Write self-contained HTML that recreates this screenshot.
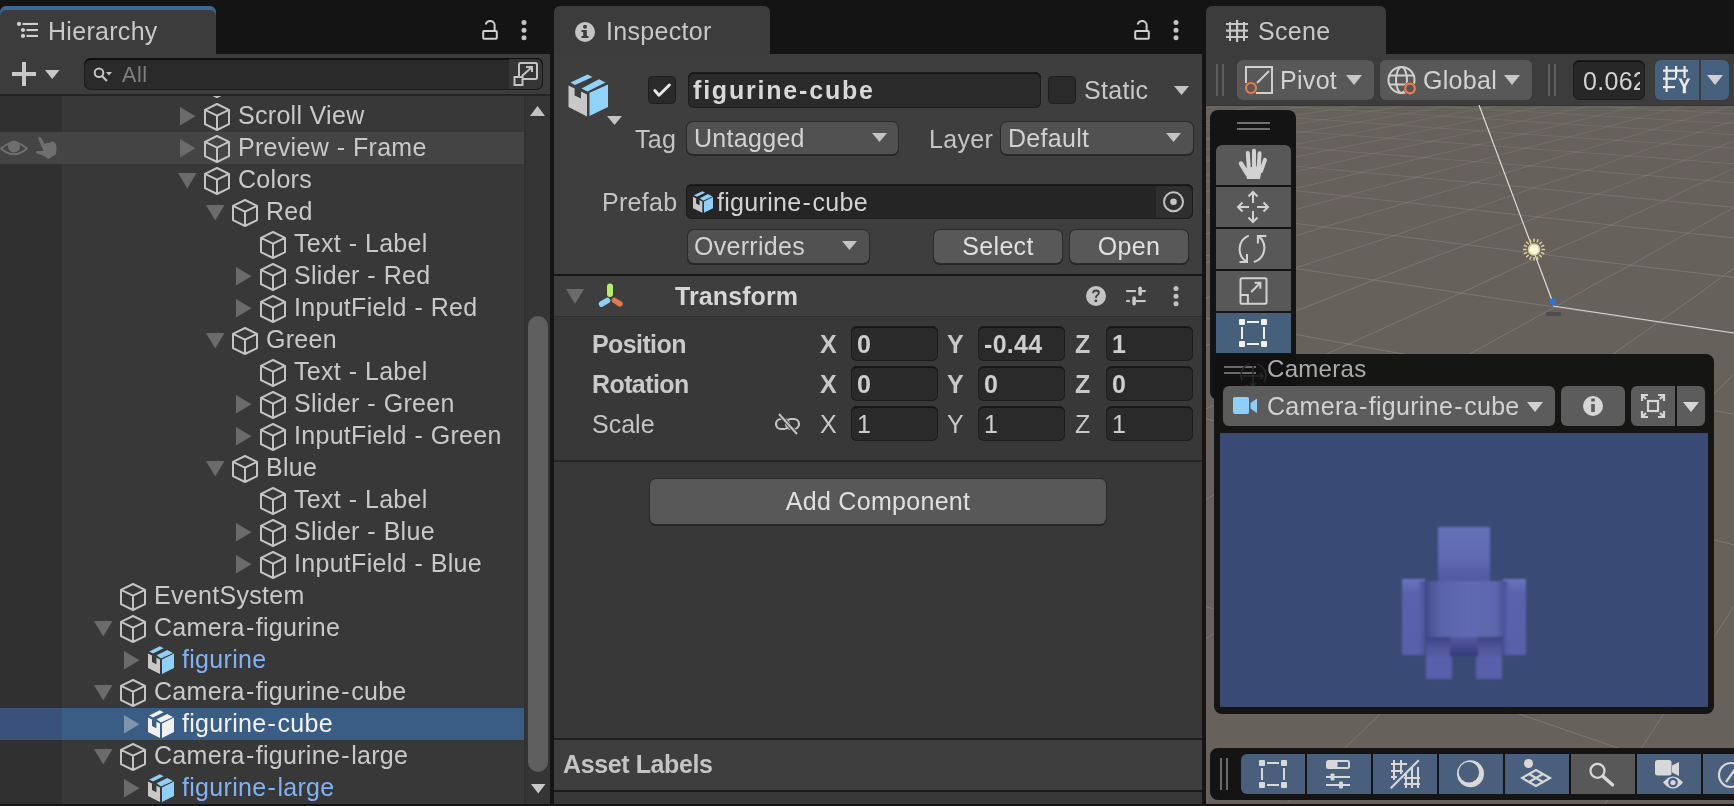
<!DOCTYPE html>
<html><head><meta charset="utf-8"><style>
html,body{margin:0;padding:0;width:1734px;height:806px;overflow:hidden;background:#141414;font-family:"Liberation Sans", sans-serif;}
.abs{position:absolute;}
.ic{position:absolute;display:block;}
.t{position:absolute;will-change:transform;font-size:25px;line-height:28px;white-space:nowrap;color:#d2d2d2;letter-spacing:0.3px}
.tab{position:absolute;top:6px;height:48px;background:#3c3c3c;border-radius:6px 6px 0 0;overflow:hidden}
.stripe{position:absolute;left:0;top:0;right:0;bottom:0;border-radius:6px 6px 0 0;box-shadow:inset 0 4px 0 #3c6898}
.tabt{position:absolute;will-change:transform;top:11px;font-size:25px;line-height:28px;color:#c8c8c8;letter-spacing:0.3px}
</style></head><body>
<div class="tab" style="left:0;width:216px;"><div class="stripe"></div><svg class="ic" style="left:16px;top:15px" width="24" height="20" viewBox="0 0 24 20"><circle cx="3" cy="2.9" r="2.1" fill="#cfcfcf"/><circle cx="7" cy="9" r="2.1" fill="#cfcfcf"/><circle cx="7" cy="14.9" r="2.1" fill="#cfcfcf"/><rect x="6.5" y="1.9" width="15.5" height="2.1" fill="#cfcfcf"/><rect x="10.5" y="8" width="11.5" height="2.1" fill="#cfcfcf"/><rect x="10.5" y="13.9" width="11.5" height="2.1" fill="#cfcfcf"/></svg><span class="tabt" style="left:48px">Hierarchy</span></div><svg class="ic" style="left:480px;top:20px" width="20" height="22" viewBox="0 0 20 22"><rect x="3.2" y="11" width="13.6" height="7.8" rx="1" fill="none" stroke="#cfcfcf" stroke-width="2"/><path d="M14.6 11 L14.6 6.2 A4.6 4.6 0 0 0 5.6 4.4" fill="none" stroke="#cfcfcf" stroke-width="2"/></svg><svg class="ic" style="left:520px;top:20px" width="8" height="22" viewBox="0 0 8 22"><circle cx="4" cy="2.6" r="2.5" fill="#c4c4c4"/><circle cx="4" cy="10.2" r="2.5" fill="#c4c4c4"/><circle cx="4" cy="17.8" r="2.5" fill="#c4c4c4"/></svg><div class="abs" style="left:0;top:54px;width:550px;height:750px;background:#383838"></div><div class="abs" style="left:0;top:54px;width:550px;height:40px;background:#3c3c3c"></div><div class="abs" style="left:0;top:94px;width:550px;height:2px;background:#242424"></div><div class="abs" style="left:12px;top:72px;width:24px;height:4px;background:#c8c8c8"></div><div class="abs" style="left:22px;top:62px;width:4px;height:24px;background:#c8c8c8"></div><svg class="ic" style="left:45px;top:70px" width="15" height="10" viewBox="0 0 15 10"><path d="M0 0 L14.5 0 L7.25 9 Z" fill="#c8c8c8"/></svg><div class="abs" style="left:84px;top:58px;width:459px;height:32px;border-radius:7px;background:#2a2a2a;box-shadow:inset 0 2px 0 #0f0f0f, inset 0 0 0 1px #1c1c1c"></div><svg class="ic" style="left:92px;top:66px" width="24" height="18" viewBox="0 0 24 18"><circle cx="7" cy="6.8" r="4.3" fill="none" stroke="#c4c4c4" stroke-width="2"/><path d="M10 10 L15 15" stroke="#c4c4c4" stroke-width="2.2"/><path d="M14 6 L20 6 L17 9.5 Z" fill="#c4c4c4"/></svg><span class="t" style="left:122px;top:61px;font-size:21.5px;color:#808080;letter-spacing:0.6px">All</span><div class="abs" style="left:509px;top:59px;width:33px;height:30px;border-radius:0 6px 6px 0;background:#363636"></div><svg class="ic" style="left:513px;top:61px" width="26" height="26" viewBox="0 0 26 26"><rect x="6" y="2" width="18" height="16" rx="1.5" fill="none" stroke="#c4c4c4" stroke-width="2"/><rect x="1.5" y="16" width="8" height="8" fill="#363636" stroke="#c4c4c4" stroke-width="2"/><path d="M9 15 L19 6 M13 6 L19 6 L19 11" fill="none" stroke="#c4c4c4" stroke-width="2"/></svg><div class="abs" style="left:0;top:96px;width:62px;height:708px;background:#303030"></div><div id="tree" class="abs" style="left:0;top:96px;width:524px;height:708px;overflow:hidden"><svg class="ic" style="left:203px;top:-27px" width="28" height="30" viewBox="-1 -1 28 30"><path d="M13 1 L25 6.8 L25 21.2 L13 27 L1 21.2 L1 6.8 Z M1 6.8 L13 12.6 L25 6.8 M13 12.6 L13 27" fill="none" stroke="#c4c4c4" stroke-width="2" stroke-linejoin="round"/></svg><svg class="ic" style="left:180px;top:11px" width="16" height="19" viewBox="0 0 16 19"><path d="M0 0 L15.5 9.25 L0 18.5 Z" fill="#6b6b6b"/></svg><svg class="ic" style="left:203px;top:5.5px" width="28" height="30" viewBox="-1 -1 28 30"><path d="M13 1 L25 6.8 L25 21.2 L13 27 L1 21.2 L1 6.8 Z M1 6.8 L13 12.6 L25 6.8 M13 12.6 L13 27" fill="none" stroke="#c4c4c4" stroke-width="2" stroke-linejoin="round"/></svg><span class="t" style="left:238px;top:5px;color:#c9c9c9">Scroll View</span><div class="abs" style="left:0;top:36px;width:524px;height:32px;background:#444444"></div><svg class="ic" style="left:0px;top:44px" width="30" height="18" viewBox="0 0 30 18"><path d="M1 8.5 Q14 -3 27 8.5 Q14 20 1 8.5 Z" fill="none" stroke="#6f6f6f" stroke-width="1.8"/><circle cx="14" cy="6.5" r="6" fill="#6f6f6f"/></svg><svg class="ic" style="left:35px;top:40px" width="24" height="24" viewBox="0 0 24 24"><path d="M3 2 Q5 0 6.5 2.5 L9.5 8 L12 6.8 L14.5 7 L16.5 5.5 L19 6 Q21 7 21.5 12 L21 18 L13.5 23 L9 20 L2 17.5 Q0 16 2 15 L8.5 15 Z" fill="#6f6f6f"/></svg><svg class="ic" style="left:180px;top:43px" width="16" height="19" viewBox="0 0 16 19"><path d="M0 0 L15.5 9.25 L0 18.5 Z" fill="#6b6b6b"/></svg><svg class="ic" style="left:203px;top:37.5px" width="28" height="30" viewBox="-1 -1 28 30"><path d="M13 1 L25 6.8 L25 21.2 L13 27 L1 21.2 L1 6.8 Z M1 6.8 L13 12.6 L25 6.8 M13 12.6 L13 27" fill="none" stroke="#c4c4c4" stroke-width="2" stroke-linejoin="round"/></svg><span class="t" style="left:238px;top:37px;color:#c9c9c9">Preview <span style="margin:0 0.4px">-</span> Frame</span><svg class="ic" style="left:178px;top:77px" width="19" height="16" viewBox="0 0 19 16"><path d="M0 0 L18.5 0 L9.25 15.5 Z" fill="#6b6b6b"/></svg><svg class="ic" style="left:203px;top:69.5px" width="28" height="30" viewBox="-1 -1 28 30"><path d="M13 1 L25 6.8 L25 21.2 L13 27 L1 21.2 L1 6.8 Z M1 6.8 L13 12.6 L25 6.8 M13 12.6 L13 27" fill="none" stroke="#c4c4c4" stroke-width="2" stroke-linejoin="round"/></svg><span class="t" style="left:238px;top:69px;color:#c9c9c9">Colors</span><svg class="ic" style="left:206px;top:109px" width="19" height="16" viewBox="0 0 19 16"><path d="M0 0 L18.5 0 L9.25 15.5 Z" fill="#6b6b6b"/></svg><svg class="ic" style="left:231px;top:101.5px" width="28" height="30" viewBox="-1 -1 28 30"><path d="M13 1 L25 6.8 L25 21.2 L13 27 L1 21.2 L1 6.8 Z M1 6.8 L13 12.6 L25 6.8 M13 12.6 L13 27" fill="none" stroke="#c4c4c4" stroke-width="2" stroke-linejoin="round"/></svg><span class="t" style="left:266px;top:101px;color:#c9c9c9">Red</span><svg class="ic" style="left:259px;top:133.5px" width="28" height="30" viewBox="-1 -1 28 30"><path d="M13 1 L25 6.8 L25 21.2 L13 27 L1 21.2 L1 6.8 Z M1 6.8 L13 12.6 L25 6.8 M13 12.6 L13 27" fill="none" stroke="#c4c4c4" stroke-width="2" stroke-linejoin="round"/></svg><span class="t" style="left:294px;top:133px;color:#c9c9c9">Text <span style="margin:0 0.4px">-</span> Label</span><svg class="ic" style="left:236px;top:171px" width="16" height="19" viewBox="0 0 16 19"><path d="M0 0 L15.5 9.25 L0 18.5 Z" fill="#6b6b6b"/></svg><svg class="ic" style="left:259px;top:165.5px" width="28" height="30" viewBox="-1 -1 28 30"><path d="M13 1 L25 6.8 L25 21.2 L13 27 L1 21.2 L1 6.8 Z M1 6.8 L13 12.6 L25 6.8 M13 12.6 L13 27" fill="none" stroke="#c4c4c4" stroke-width="2" stroke-linejoin="round"/></svg><span class="t" style="left:294px;top:165px;color:#c9c9c9">Slider <span style="margin:0 0.4px">-</span> Red</span><svg class="ic" style="left:236px;top:203px" width="16" height="19" viewBox="0 0 16 19"><path d="M0 0 L15.5 9.25 L0 18.5 Z" fill="#6b6b6b"/></svg><svg class="ic" style="left:259px;top:197.5px" width="28" height="30" viewBox="-1 -1 28 30"><path d="M13 1 L25 6.8 L25 21.2 L13 27 L1 21.2 L1 6.8 Z M1 6.8 L13 12.6 L25 6.8 M13 12.6 L13 27" fill="none" stroke="#c4c4c4" stroke-width="2" stroke-linejoin="round"/></svg><span class="t" style="left:294px;top:197px;color:#c9c9c9">InputField <span style="margin:0 0.4px">-</span> Red</span><svg class="ic" style="left:206px;top:237px" width="19" height="16" viewBox="0 0 19 16"><path d="M0 0 L18.5 0 L9.25 15.5 Z" fill="#6b6b6b"/></svg><svg class="ic" style="left:231px;top:229.5px" width="28" height="30" viewBox="-1 -1 28 30"><path d="M13 1 L25 6.8 L25 21.2 L13 27 L1 21.2 L1 6.8 Z M1 6.8 L13 12.6 L25 6.8 M13 12.6 L13 27" fill="none" stroke="#c4c4c4" stroke-width="2" stroke-linejoin="round"/></svg><span class="t" style="left:266px;top:229px;color:#c9c9c9">Green</span><svg class="ic" style="left:259px;top:261.5px" width="28" height="30" viewBox="-1 -1 28 30"><path d="M13 1 L25 6.8 L25 21.2 L13 27 L1 21.2 L1 6.8 Z M1 6.8 L13 12.6 L25 6.8 M13 12.6 L13 27" fill="none" stroke="#c4c4c4" stroke-width="2" stroke-linejoin="round"/></svg><span class="t" style="left:294px;top:261px;color:#c9c9c9">Text <span style="margin:0 0.4px">-</span> Label</span><svg class="ic" style="left:236px;top:299px" width="16" height="19" viewBox="0 0 16 19"><path d="M0 0 L15.5 9.25 L0 18.5 Z" fill="#6b6b6b"/></svg><svg class="ic" style="left:259px;top:293.5px" width="28" height="30" viewBox="-1 -1 28 30"><path d="M13 1 L25 6.8 L25 21.2 L13 27 L1 21.2 L1 6.8 Z M1 6.8 L13 12.6 L25 6.8 M13 12.6 L13 27" fill="none" stroke="#c4c4c4" stroke-width="2" stroke-linejoin="round"/></svg><span class="t" style="left:294px;top:293px;color:#c9c9c9">Slider <span style="margin:0 0.4px">-</span> Green</span><svg class="ic" style="left:236px;top:331px" width="16" height="19" viewBox="0 0 16 19"><path d="M0 0 L15.5 9.25 L0 18.5 Z" fill="#6b6b6b"/></svg><svg class="ic" style="left:259px;top:325.5px" width="28" height="30" viewBox="-1 -1 28 30"><path d="M13 1 L25 6.8 L25 21.2 L13 27 L1 21.2 L1 6.8 Z M1 6.8 L13 12.6 L25 6.8 M13 12.6 L13 27" fill="none" stroke="#c4c4c4" stroke-width="2" stroke-linejoin="round"/></svg><span class="t" style="left:294px;top:325px;color:#c9c9c9">InputField <span style="margin:0 0.4px">-</span> Green</span><svg class="ic" style="left:206px;top:365px" width="19" height="16" viewBox="0 0 19 16"><path d="M0 0 L18.5 0 L9.25 15.5 Z" fill="#6b6b6b"/></svg><svg class="ic" style="left:231px;top:357.5px" width="28" height="30" viewBox="-1 -1 28 30"><path d="M13 1 L25 6.8 L25 21.2 L13 27 L1 21.2 L1 6.8 Z M1 6.8 L13 12.6 L25 6.8 M13 12.6 L13 27" fill="none" stroke="#c4c4c4" stroke-width="2" stroke-linejoin="round"/></svg><span class="t" style="left:266px;top:357px;color:#c9c9c9">Blue</span><svg class="ic" style="left:259px;top:389.5px" width="28" height="30" viewBox="-1 -1 28 30"><path d="M13 1 L25 6.8 L25 21.2 L13 27 L1 21.2 L1 6.8 Z M1 6.8 L13 12.6 L25 6.8 M13 12.6 L13 27" fill="none" stroke="#c4c4c4" stroke-width="2" stroke-linejoin="round"/></svg><span class="t" style="left:294px;top:389px;color:#c9c9c9">Text <span style="margin:0 0.4px">-</span> Label</span><svg class="ic" style="left:236px;top:427px" width="16" height="19" viewBox="0 0 16 19"><path d="M0 0 L15.5 9.25 L0 18.5 Z" fill="#6b6b6b"/></svg><svg class="ic" style="left:259px;top:421.5px" width="28" height="30" viewBox="-1 -1 28 30"><path d="M13 1 L25 6.8 L25 21.2 L13 27 L1 21.2 L1 6.8 Z M1 6.8 L13 12.6 L25 6.8 M13 12.6 L13 27" fill="none" stroke="#c4c4c4" stroke-width="2" stroke-linejoin="round"/></svg><span class="t" style="left:294px;top:421px;color:#c9c9c9">Slider <span style="margin:0 0.4px">-</span> Blue</span><svg class="ic" style="left:236px;top:459px" width="16" height="19" viewBox="0 0 16 19"><path d="M0 0 L15.5 9.25 L0 18.5 Z" fill="#6b6b6b"/></svg><svg class="ic" style="left:259px;top:453.5px" width="28" height="30" viewBox="-1 -1 28 30"><path d="M13 1 L25 6.8 L25 21.2 L13 27 L1 21.2 L1 6.8 Z M1 6.8 L13 12.6 L25 6.8 M13 12.6 L13 27" fill="none" stroke="#c4c4c4" stroke-width="2" stroke-linejoin="round"/></svg><span class="t" style="left:294px;top:453px;color:#c9c9c9">InputField <span style="margin:0 0.4px">-</span> Blue</span><svg class="ic" style="left:119px;top:485.5px" width="28" height="30" viewBox="-1 -1 28 30"><path d="M13 1 L25 6.8 L25 21.2 L13 27 L1 21.2 L1 6.8 Z M1 6.8 L13 12.6 L25 6.8 M13 12.6 L13 27" fill="none" stroke="#c4c4c4" stroke-width="2" stroke-linejoin="round"/></svg><span class="t" style="left:154px;top:485px;color:#c9c9c9">EventSystem</span><svg class="ic" style="left:94px;top:525px" width="19" height="16" viewBox="0 0 19 16"><path d="M0 0 L18.5 0 L9.25 15.5 Z" fill="#6b6b6b"/></svg><svg class="ic" style="left:119px;top:517.5px" width="28" height="30" viewBox="-1 -1 28 30"><path d="M13 1 L25 6.8 L25 21.2 L13 27 L1 21.2 L1 6.8 Z M1 6.8 L13 12.6 L25 6.8 M13 12.6 L13 27" fill="none" stroke="#c4c4c4" stroke-width="2" stroke-linejoin="round"/></svg><span class="t" style="left:154px;top:517px;color:#c9c9c9">Camera<span style="margin:0 1.2px">-</span>figurine</span><svg class="ic" style="left:124px;top:555px" width="16" height="19" viewBox="0 0 16 19"><path d="M0 0 L15.5 9.25 L0 18.5 Z" fill="#6b6b6b"/></svg><svg class="ic" style="left:148px;top:550px" width="26.0" height="28.0" viewBox="0 0 26 28"><path d="M0 7.5 L12 13.5 L12 28 L0 22 Z" fill="#c8c8c8"/><path d="M14 13.5 L26 7.5 L26 22 L14 28 Z" fill="#8dd0f8"/><path d="M1.2 5.6 L11.8 0.3 L15.6 2.2 L5 7.5 Z" fill="#8dd0f8"/><path d="M8.6 9.3 L19.2 4 L25 6.9 L13 12.6 Z" fill="#8dd0f8"/><path d="M4 9.2 L8.4 11.4 L8.4 18.3 L4 16.1 Z" fill="#383838"/></svg><span class="t" style="left:182px;top:549px;color:#80b2f4">figurine</span><svg class="ic" style="left:94px;top:589px" width="19" height="16" viewBox="0 0 19 16"><path d="M0 0 L18.5 0 L9.25 15.5 Z" fill="#6b6b6b"/></svg><svg class="ic" style="left:119px;top:581.5px" width="28" height="30" viewBox="-1 -1 28 30"><path d="M13 1 L25 6.8 L25 21.2 L13 27 L1 21.2 L1 6.8 Z M1 6.8 L13 12.6 L25 6.8 M13 12.6 L13 27" fill="none" stroke="#c4c4c4" stroke-width="2" stroke-linejoin="round"/></svg><span class="t" style="left:154px;top:581px;color:#c9c9c9">Camera<span style="margin:0 1.2px">-</span>figurine<span style="margin:0 1.2px">-</span>cube</span><div class="abs" style="left:0;top:612px;width:524px;height:32px;background:#395d85"></div><div class="abs" style="left:0;top:612px;width:62px;height:32px;background:#3a5279"></div><svg class="ic" style="left:124px;top:619px" width="16" height="19" viewBox="0 0 16 19"><path d="M0 0 L15.5 9.25 L0 18.5 Z" fill="#7d95ad"/></svg><svg class="ic" style="left:148px;top:614px" width="26.0" height="28.0" viewBox="0 0 26 28"><path d="M0 7.5 L12 13.5 L12 28 L0 22 Z" fill="#f0f0f0"/><path d="M14 13.5 L26 7.5 L26 22 L14 28 Z" fill="#f0f0f0"/><path d="M1.2 5.6 L11.8 0.3 L15.6 2.2 L5 7.5 Z" fill="#f0f0f0"/><path d="M8.6 9.3 L19.2 4 L25 6.9 L13 12.6 Z" fill="#f0f0f0"/><path d="M4 9.2 L8.4 11.4 L8.4 18.3 L4 16.1 Z" fill="#395d85"/></svg><span class="t" style="left:182px;top:613px;color:#f2f2f2">figurine<span style="margin:0 1.2px">-</span>cube</span><svg class="ic" style="left:94px;top:653px" width="19" height="16" viewBox="0 0 19 16"><path d="M0 0 L18.5 0 L9.25 15.5 Z" fill="#6b6b6b"/></svg><svg class="ic" style="left:119px;top:645.5px" width="28" height="30" viewBox="-1 -1 28 30"><path d="M13 1 L25 6.8 L25 21.2 L13 27 L1 21.2 L1 6.8 Z M1 6.8 L13 12.6 L25 6.8 M13 12.6 L13 27" fill="none" stroke="#c4c4c4" stroke-width="2" stroke-linejoin="round"/></svg><span class="t" style="left:154px;top:645px;color:#c9c9c9">Camera<span style="margin:0 1.2px">-</span>figurine<span style="margin:0 1.2px">-</span>large</span><svg class="ic" style="left:124px;top:683px" width="16" height="19" viewBox="0 0 16 19"><path d="M0 0 L15.5 9.25 L0 18.5 Z" fill="#6b6b6b"/></svg><svg class="ic" style="left:148px;top:678px" width="26.0" height="28.0" viewBox="0 0 26 28"><path d="M0 7.5 L12 13.5 L12 28 L0 22 Z" fill="#c8c8c8"/><path d="M14 13.5 L26 7.5 L26 22 L14 28 Z" fill="#8dd0f8"/><path d="M1.2 5.6 L11.8 0.3 L15.6 2.2 L5 7.5 Z" fill="#8dd0f8"/><path d="M8.6 9.3 L19.2 4 L25 6.9 L13 12.6 Z" fill="#8dd0f8"/><path d="M4 9.2 L8.4 11.4 L8.4 18.3 L4 16.1 Z" fill="#383838"/></svg><span class="t" style="left:182px;top:677px;color:#80b2f4">figurine<span style="margin:0 1.2px">-</span>large</span></div><div class="abs" style="left:524px;top:96px;width:26px;height:708px;background:#353535;box-shadow:inset 2px 0 0 #303030"></div><svg class="ic" style="left:530px;top:105px" width="16" height="12" viewBox="0 0 16 12"><path d="M0 11 L15 11 L7.5 1 Z" fill="#c4c4c4"/></svg><svg class="ic" style="left:531px;top:783px" width="16" height="12" viewBox="0 0 16 12"><path d="M0 1 L14.5 1 L7.25 10.5 Z" fill="#c8c8c8"/></svg><div class="abs" style="left:528px;top:316px;width:20px;height:456px;border-radius:10px;background:#5f5f5f"></div>
<div class="tab" style="left:554px;width:216px;"><svg class="ic" style="left:20px;top:15px" width="22" height="22" viewBox="0 0 22 22"><circle cx="11" cy="11" r="10" fill="#c4c4c4"/><rect x="9.2" y="9" width="3.6" height="8" fill="#3c3c3c"/><circle cx="11" cy="5.8" r="2" fill="#3c3c3c"/><rect x="7.5" y="9" width="3" height="2" fill="#3c3c3c"/><rect x="7.5" y="15" width="7" height="2" fill="#3c3c3c"/></svg><span class="tabt" style="left:52px">Inspector</span></div><svg class="ic" style="left:1132px;top:20px" width="20" height="22" viewBox="0 0 20 22"><rect x="3.2" y="11" width="13.6" height="7.8" rx="1" fill="none" stroke="#cfcfcf" stroke-width="2"/><path d="M14.6 11 L14.6 6.2 A4.6 4.6 0 0 0 5.6 4.4" fill="none" stroke="#cfcfcf" stroke-width="2"/></svg><svg class="ic" style="left:1172px;top:20px" width="8" height="22" viewBox="0 0 8 22"><circle cx="4" cy="2.6" r="2.5" fill="#c4c4c4"/><circle cx="4" cy="10.2" r="2.5" fill="#c4c4c4"/><circle cx="4" cy="17.8" r="2.5" fill="#c4c4c4"/></svg><div class="abs" style="left:554px;top:54px;width:648px;height:750px;background:#383838"></div><div class="abs" style="left:554px;top:54px;width:648px;height:220px;background:#3e3e3e"></div><svg class="ic" style="left:568px;top:74px" width="42" height="44" viewBox="0 0 42 44"><path d="M0.5 11.5 L19 20.5 L19 42.5 L0.5 33 Z" fill="#c8c8c8"/><path d="M21.5 18.8 L40 10.5 L40 33 L21.5 42 Z" fill="#8fd3fb"/><path d="M2.5 8.5 L19.5 0.5 L24.5 3 L7 11 Z" fill="#8fd3fb"/><path d="M13.5 14.5 L31 5.2 L37.5 8.5 L19.5 17.5 Z" fill="#8fd3fb"/><path d="M6.6 13.5 L13 16.8 L13 24.4 L6.6 21.6 Z" fill="#3e3e3e"/></svg><svg class="ic" style="left:607px;top:116px" width="15" height="9" viewBox="0 0 15 9"><path d="M0 0 L15 0 L7.5 9 Z" fill="#c4c4c4"/></svg><div class="abs" style="left:648px;top:76px;width:28px;height:28px;border-radius:5px;background:#2a2a2a;box-shadow:inset 0 0 0 1px #1e1e1e"></div><svg class="ic" style="left:648px;top:76px" width="28" height="28" viewBox="0 0 28 28"><path d="M6.8 14.6 L11 19.2 L21.4 9" fill="none" stroke="#e8e8e8" stroke-width="3" stroke-linecap="round" stroke-linejoin="round"/></svg><div class="abs" style="left:688px;top:72px;width:353px;height:36px;border-radius:6px;background:#2a2a2a;box-shadow:inset 0 0 0 1px #1d1d1d, inset 0 2px 0 #151515;"></div><span class="t" style="left:693px;top:76px;font-weight:bold;color:#d8d8d8;letter-spacing:1.8px">figurine-cube</span><div class="abs" style="left:1048px;top:76px;width:28px;height:28px;border-radius:5px;background:#2a2a2a;box-shadow:inset 0 0 0 1px #1e1e1e"></div><span class="t" style="left:1084px;top:76px;color:#c8c8c8">Static</span><svg class="ic" style="left:1174px;top:86px" width="15" height="9" viewBox="0 0 15 9"><path d="M0 0 L15 0 L7.5 9 Z" fill="#c4c4c4"/></svg><span class="t" style="left:635px;top:125px;color:#c4c4c4">Tag</span><div class="abs" style="left:687px;top:122px;width:211px;height:32px;border-radius:6px;background:#515151;box-shadow:0 0 0 1px #2b2b2b, 0 1px 0 1px #242424"></div><span class="t" style="left:694px;top:124px;color:#d2d2d2">Untagged</span><svg class="ic" style="left:872px;top:133px" width="15" height="9" viewBox="0 0 15 9"><path d="M0 0 L15 0 L7.5 9 Z" fill="#c4c4c4"/></svg><span class="t" style="left:929px;top:125px;color:#c4c4c4">Layer</span><div class="abs" style="left:1001px;top:122px;width:192px;height:32px;border-radius:6px;background:#515151;box-shadow:0 0 0 1px #2b2b2b, 0 1px 0 1px #242424"></div><span class="t" style="left:1008px;top:124px;color:#d2d2d2">Default</span><svg class="ic" style="left:1166px;top:133px" width="15" height="9" viewBox="0 0 15 9"><path d="M0 0 L15 0 L7.5 9 Z" fill="#c4c4c4"/></svg><span class="t" style="left:602px;top:188px;color:#c4c4c4">Prefab</span><div class="abs" style="left:686px;top:184px;width:507px;height:35px;border-radius:6px;background:#252525;box-shadow:inset 0 0 0 1px #1d1d1d, inset 0 2px 0 #151515;"></div><div class="abs" style="left:1156px;top:186px;width:36px;height:32px;border-radius:0 6px 6px 0;background:#2f2f2f"></div><svg class="ic" style="left:1162px;top:190px" width="24" height="24" viewBox="0 0 24 24"><circle cx="11.5" cy="11.8" r="9.5" fill="none" stroke="#c4c4c4" stroke-width="2"/><circle cx="11.5" cy="11.8" r="3.3" fill="#c4c4c4"/></svg><svg class="ic" style="left:693px;top:191px" width="20.28" height="21.84" viewBox="0 0 26 28"><path d="M0 7.5 L12 13.5 L12 28 L0 22 Z" fill="#c8c8c8"/><path d="M14 13.5 L26 7.5 L26 22 L14 28 Z" fill="#8dd0f8"/><path d="M1.2 5.6 L11.8 0.3 L15.6 2.2 L5 7.5 Z" fill="#8dd0f8"/><path d="M8.6 9.3 L19.2 4 L25 6.9 L13 12.6 Z" fill="#8dd0f8"/><path d="M4 9.2 L8.4 11.4 L8.4 18.3 L4 16.1 Z" fill="#252525"/></svg><span class="t" style="left:717px;top:188px;color:#d2d2d2">figurine<span style="margin:0 1.2px">-</span>cube</span><div class="abs" style="left:688px;top:230px;width:181px;height:33px;border-radius:6px;background:#515151;box-shadow:0 0 0 1px #2b2b2b, 0 1px 0 1px #242424"></div><span class="t" style="left:694px;top:232px;color:#d2d2d2">Overrides</span><svg class="ic" style="left:842px;top:241px" width="15" height="9" viewBox="0 0 15 9"><path d="M0 0 L15 0 L7.5 9 Z" fill="#c4c4c4"/></svg><div class="abs" style="left:934px;top:230px;width:128px;height:33px;border-radius:6px;background:#585858;box-shadow:0 0 0 1px #2b2b2b, 0 1px 0 1px #242424"></div><span class="t" style="left:934px;width:128px;text-align:center;top:232px;color:#e0e0e0">Select</span><div class="abs" style="left:1070px;top:230px;width:118px;height:33px;border-radius:6px;background:#585858;box-shadow:0 0 0 1px #2b2b2b, 0 1px 0 1px #242424"></div><span class="t" style="left:1070px;width:118px;text-align:center;top:232px;color:#e0e0e0">Open</span><div class="abs" style="left:554px;top:274px;width:648px;height:2px;background:#161616"></div><div class="abs" style="left:554px;top:276px;width:648px;height:40px;background:#3e3e3e"></div><div class="abs" style="left:554px;top:316px;width:648px;height:1px;background:#2f2f2f"></div><svg class="ic" style="left:566px;top:289px" width="18" height="15" viewBox="0 0 18 15"><path d="M0 0 L18 0 L9.0 15 Z" fill="#6b6b6b"/></svg><svg class="ic" style="left:596px;top:282px" width="30" height="26" viewBox="0 0 30 26"><path d="M14 4.5 L14 12" stroke="#b3f066" stroke-width="6" stroke-linecap="round"/><path d="M5.5 22 L11.5 18.5" stroke="#8ccff8" stroke-width="5.5" stroke-linecap="round"/><path d="M18.5 18.5 L24 21.8" stroke="#e9754a" stroke-width="5.5" stroke-linecap="round"/></svg><span class="t" style="left:675px;top:282px;font-weight:bold;color:#d6d6d6;letter-spacing:0.1px">Transform</span><svg class="ic" style="left:1085px;top:285px" width="22" height="22" viewBox="0 0 22 22"><circle cx="11" cy="11" r="10" fill="#c4c4c4"/><path d="M7.2 8.2 Q7.2 4.6 11 4.6 Q14.8 4.6 14.8 7.8 Q14.8 9.8 12.6 10.9 Q11.8 11.4 11.8 12.9 L10 12.9 Q10 10.6 11.4 9.7 Q12.9 8.8 12.9 7.9 Q12.9 6.4 11 6.4 Q9.1 6.4 9.1 8.2 Z" fill="#3e3e3e"/><circle cx="10.9" cy="15.8" r="1.4" fill="#3e3e3e"/></svg><svg class="ic" style="left:1125px;top:285px" width="22" height="22" viewBox="0 0 22 22" fill="#c8c8c8"><rect x="1.2" y="5" width="9.7" height="2.1"/><rect x="16.9" y="5" width="3.8" height="2.1"/><rect x="13.3" y="1.5" width="3.6" height="9.4" rx="1.8"/><rect x="1.2" y="15" width="3.7" height="2.1"/><rect x="10.9" y="15" width="9.8" height="2.1"/><rect x="7.3" y="11.2" width="3.6" height="9.4" rx="1.8"/></svg><svg class="ic" style="left:1172px;top:286px" width="8" height="22" viewBox="0 0 8 22"><circle cx="4" cy="2.6" r="2.5" fill="#c4c4c4"/><circle cx="4" cy="10.2" r="2.5" fill="#c4c4c4"/><circle cx="4" cy="17.8" r="2.5" fill="#c4c4c4"/></svg><span class="t" style="left:592px;top:330px;font-weight:bold;color:#cacaca;letter-spacing:-0.6px">Position</span><div class="abs" style="left:851px;top:326px;width:87px;height:35px;border-radius:6px;background:#2a2a2a;box-shadow:inset 0 0 0 1px #1d1d1d, inset 0 2px 0 #151515;"></div><span class="t" style="left:820px;top:330px;font-weight:bold;color:#c8c8c8">X</span><span class="t" style="left:857px;top:330px;font-weight:bold;color:#cdcdcd">0</span><div class="abs" style="left:978px;top:326px;width:87px;height:35px;border-radius:6px;background:#2a2a2a;box-shadow:inset 0 0 0 1px #1d1d1d, inset 0 2px 0 #151515;"></div><span class="t" style="left:947px;top:330px;font-weight:bold;color:#c8c8c8">Y</span><span class="t" style="left:984px;top:330px;font-weight:bold;color:#cdcdcd">-0.44</span><div class="abs" style="left:1106px;top:326px;width:87px;height:35px;border-radius:6px;background:#2a2a2a;box-shadow:inset 0 0 0 1px #1d1d1d, inset 0 2px 0 #151515;"></div><span class="t" style="left:1075px;top:330px;font-weight:bold;color:#c8c8c8">Z</span><span class="t" style="left:1112px;top:330px;font-weight:bold;color:#cdcdcd">1</span><span class="t" style="left:592px;top:370px;font-weight:bold;color:#cacaca;letter-spacing:-0.6px">Rotation</span><div class="abs" style="left:851px;top:366px;width:87px;height:35px;border-radius:6px;background:#2a2a2a;box-shadow:inset 0 0 0 1px #1d1d1d, inset 0 2px 0 #151515;"></div><span class="t" style="left:820px;top:370px;font-weight:bold;color:#c8c8c8">X</span><span class="t" style="left:857px;top:370px;font-weight:bold;color:#cdcdcd">0</span><div class="abs" style="left:978px;top:366px;width:87px;height:35px;border-radius:6px;background:#2a2a2a;box-shadow:inset 0 0 0 1px #1d1d1d, inset 0 2px 0 #151515;"></div><span class="t" style="left:947px;top:370px;font-weight:bold;color:#c8c8c8">Y</span><span class="t" style="left:984px;top:370px;font-weight:bold;color:#cdcdcd">0</span><div class="abs" style="left:1106px;top:366px;width:87px;height:35px;border-radius:6px;background:#2a2a2a;box-shadow:inset 0 0 0 1px #1d1d1d, inset 0 2px 0 #151515;"></div><span class="t" style="left:1075px;top:370px;font-weight:bold;color:#c8c8c8">Z</span><span class="t" style="left:1112px;top:370px;font-weight:bold;color:#cdcdcd">0</span><span class="t" style="left:592px;top:410px;font-weight:normal;color:#c4c4c4;letter-spacing:0px">Scale</span><div class="abs" style="left:851px;top:406px;width:87px;height:35px;border-radius:6px;background:#2a2a2a;box-shadow:inset 0 0 0 1px #1d1d1d, inset 0 2px 0 #151515;"></div><span class="t" style="left:820px;top:410px;font-weight:normal;color:#c8c8c8">X</span><span class="t" style="left:857px;top:410px;font-weight:normal;color:#cdcdcd">1</span><div class="abs" style="left:978px;top:406px;width:87px;height:35px;border-radius:6px;background:#2a2a2a;box-shadow:inset 0 0 0 1px #1d1d1d, inset 0 2px 0 #151515;"></div><span class="t" style="left:947px;top:410px;font-weight:normal;color:#c8c8c8">Y</span><span class="t" style="left:984px;top:410px;font-weight:normal;color:#cdcdcd">1</span><div class="abs" style="left:1106px;top:406px;width:87px;height:35px;border-radius:6px;background:#2a2a2a;box-shadow:inset 0 0 0 1px #1d1d1d, inset 0 2px 0 #151515;"></div><span class="t" style="left:1075px;top:410px;font-weight:normal;color:#c8c8c8">Z</span><span class="t" style="left:1112px;top:410px;font-weight:normal;color:#cdcdcd">1</span><svg class="ic" style="left:774px;top:413px" width="28" height="22" viewBox="0 0 28 22"><rect x="2" y="6" width="13" height="10" rx="5" fill="none" stroke="#c4c4c4" stroke-width="2.2"/><rect x="12" y="6" width="13" height="10" rx="5" fill="none" stroke="#c4c4c4" stroke-width="2.2"/><path d="M5 1 L23 21" stroke="#383838" stroke-width="4"/><path d="M5 1 L23 21" stroke="#c4c4c4" stroke-width="2"/></svg><div class="abs" style="left:554px;top:460px;width:648px;height:2px;background:#242424"></div><div class="abs" style="left:650px;top:479px;width:456px;height:45px;border-radius:6px;background:#585858;box-shadow:0 0 0 1px #2b2b2b, 0 1px 0 1px #242424"></div><span class="t" style="left:650px;width:456px;text-align:center;top:487px;color:#e0e0e0">Add Component</span><div class="abs" style="left:554px;top:738px;width:648px;height:2px;background:#1e1e1e"></div><div class="abs" style="left:554px;top:740px;width:648px;height:50px;background:#3e3e3e"></div><div class="abs" style="left:554px;top:790px;width:648px;height:2px;background:#1a1a1a"></div><span class="t" style="left:563px;top:750px;font-weight:bold;color:#c4c4c4;letter-spacing:-0.4px">Asset Labels</span>
<div class="tab" style="left:1206px;width:180px;"><svg class="ic" style="left:20px;top:13px" width="24" height="24" viewBox="0 0 24 24" fill="#c8c8c8"><rect x="3" y="3" width="2" height="19"/><rect x="10" y="1" width="2.2" height="22"/><rect x="17" y="3" width="2" height="19"/><rect x="0" y="4" width="22" height="2"/><rect x="0" y="10.5" width="22" height="2.2"/><rect x="0" y="17" width="22" height="2"/></svg><span class="tabt" style="left:52px">Scene</span></div><div class="abs" style="left:1206px;top:54px;width:528px;height:750px;background:#67615c;overflow:hidden"><svg class="ic" style="left:0;top:0" width="528" height="749" viewBox="1206 54 528 749"><path d="M1285 35L1437 26M1308 34L1455 25M1321 35L1473 25M1344 34L1485 25M1366 34L1503 25M1380 34L1515 25M1402 34L1533 25M1425 34L1551 25M1439 34L1563 25M1461 34L1581 25M1475 34L1594 25M1497 34L1611 25M1519 34L1629 25M1534 34L1642 25M1556 34L1659 25M1571 34L1677 25M1592 34L1690 25M1614 34L1707 25M1629 34L1720 25M1651 34L1734 25M1672 33L1747 25M1688 34L1761 25M1709 33L1775 26M1725 34L1789 26M1746 33L1803 26M1767 33L1818 26M1783 33L1832 27M1804 33L1847 27M1824 33L1862 27M1841 33L1877 27M1862 33L1893 27M1879 33L1908 28M1899 33L1924 28M1919 33L1940 28M1937 33L1956 28M1957 33L1972 29M1975 33L1989 29M1995 33L2005 29M2014 33L2022 29M2033 33L2040 30M2052 33L2057 30M2072 32L2075 30M2090 33L2093 31M2110 32L2111 31M2129 33L2129 31M2148 32L2148 31M2167 32L2167 32M2186 32L2186 32M1304 33L1344 34M1322 32L1402 34M1339 31L1468 34M1356 30L1526 34M1372 29L1592 34M1387 28L1651 34M1402 28L1717 34M1416 27L1775 33M1430 26L1833 33M1449 25L1899 33M1503 25L1957 33M1551 25L2023 33M1605 25L2081 33M1653 25L2148 32M1707 25L2195 32" stroke="rgba(225,220,215,0.03)" stroke-width="1" fill="none"/><path d="M1017 51L1285 35M1032 51L1308 34M1064 51L1321 35M1095 50L1344 34M1111 51L1366 34M1142 50L1380 34M1158 51L1402 34M1189 51L1425 34M1219 50L1439 34M1236 51L1461 34M1267 50L1475 34M1284 51L1497 34M1314 50L1519 34M1344 50L1534 34M1362 50L1556 34M1392 50L1571 34M1421 50L1592 34M1440 50L1614 34M1469 50L1629 34M1488 50L1651 34M1517 50L1672 33M1546 49L1688 34M1566 50L1709 33M1594 49L1725 34M1622 49L1746 33M1643 50L1767 33M1671 49L1783 33M1692 50L1804 33M1720 49L1824 33M1747 49L1841 33M1769 49L1862 33M1797 49L1879 33M1819 49L1899 33M1846 49L1919 33M1873 49L1937 33M1896 49L1957 33M1922 49L1975 33M1949 48L1995 33M1972 49L2014 33M1998 48L2033 33M2023 49L2052 33M2049 49L2072 32M2074 48L2090 33M2099 49L2110 32M2125 48L2129 33M2150 48L2148 32M2175 48L2167 32M2199 47L2186 32M1034 50L1064 51M1065 48L1150 51M1095 46L1228 50M1123 44L1314 50M1150 43L1392 50M1175 41L1478 50M1199 40L1556 50M1222 38L1643 50M1244 37L1720 49M1265 36L1808 49M1285 35L1884 49M1344 34L1960 49M1402 34L2049 49M1468 34L2125 48M1526 34L2187 48M1592 34L2198 46M1651 34L2197 44M1717 34L2195 43M1775 33L2194 41M1833 33L2193 39M1899 33L2191 38M1957 33L2190 37M2023 33L2199 36M2081 33L2198 34M2148 32L2197 33" stroke="rgba(225,220,215,0.04)" stroke-width="1" fill="none"/><path d="M722 68L1017 51M763 68L1032 51M804 67L1064 51M821 68L1095 50M861 67L1111 51M878 68L1142 50M919 67L1158 51M959 67L1189 51M977 68L1219 50M1017 67L1236 51M1036 68L1267 50M1075 67L1284 51M1114 67L1314 50M1134 67L1344 50M1173 67L1362 50M1211 66L1392 50M1232 67L1421 50M1270 66L1440 50M1292 67L1469 50M1329 67L1488 50M1366 66L1517 50M1389 67L1546 49M1426 66L1566 50M1462 65L1594 49M1486 66L1622 49M1522 66L1643 50M1547 67L1671 49M1583 66L1692 50M1618 65L1720 49M1644 66L1747 49M1679 65L1769 49M1705 66L1797 49M1740 66L1819 49M1775 65L1846 49M1802 66L1873 49M1836 65L1896 49M1870 64L1922 49M1898 65L1949 48M1931 65L1972 49M1961 66L1998 48M1994 65L2023 49M2026 64L2049 49M2057 65L2074 48M2089 64L2099 49M2120 64L2125 48M2152 65L2150 48M2183 64L2175 48M748 67L763 68M797 64L870 68M844 61L968 67M887 58L1075 67M927 56L1173 67M965 54L1281 67M1000 52L1378 66M1064 51L1486 66M1150 51L1583 66M1228 50L1679 65M1314 50L1788 65M1392 50L1884 65M1478 50L1994 65M1556 50L2089 64M1643 50L2199 64M1720 49L2197 62M1808 49L2195 59M1884 49L2193 56M1960 49L2192 54M2049 49L2190 52M2125 48L2189 50" stroke="rgba(225,220,215,0.05)" stroke-width="1" fill="none"/><path d="M433 86L722 68M485 85L763 68M500 86L804 67M553 85L821 68M604 84L861 67M621 85L878 68M672 84L919 67M722 84L959 67M740 85L977 68M790 84L1017 67M810 85L1036 68M859 84L1075 67M908 83L1114 67M929 85L1134 67M977 84L1173 67M1025 83L1211 66M1047 84L1232 67M1094 83L1270 66M1118 84L1292 67M1165 83L1329 67M1211 82L1366 66M1236 84L1389 67M1282 83L1426 66M1308 84L1462 65M1353 83L1486 66M1398 82L1522 66M1426 83L1547 67M1470 83L1583 66M1513 82L1618 65M1543 83L1644 66M1586 82L1679 65M1616 83L1705 66M1659 82L1740 66M1701 81L1775 65M1733 83L1802 66M1774 82L1836 65M1808 83L1870 64M1849 82L1898 65M1889 81L1931 65M1924 82L1961 66M1964 81L1994 65M2003 80L2026 64M2039 82L2057 65M2078 81L2089 64M2116 82L2120 64M507 81L553 85M2154 81L2152 65M574 77L672 84M2192 80L2183 64M637 73L800 85M694 70L918 84M763 68L1047 84M870 68L1165 83M968 67L1295 83M1075 67L1412 83M1173 67L1528 82M1281 67L1659 82M1378 66L1774 82M1486 66L1906 82M1583 66L2021 81M1679 65L2154 81M1788 65L2190 78M1884 65L2188 74M1994 65L2187 71M2089 64L2185 67" stroke="rgba(225,220,215,0.06)" stroke-width="1" fill="none"/><path d="M165 102L433 86M177 104L485 85M241 102L500 86M304 101L553 85M319 103L604 84M382 102L621 85M398 103L672 84M460 102L722 84M521 101L740 85M539 103L790 84M600 101L810 85M619 103L859 84M679 102L908 83M738 100L929 85M760 102L977 84M819 101L1025 83M876 100L1047 84M900 102L1094 83M957 100L1118 84M983 102L1165 83M1039 101L1211 82M1094 99L1236 84M1122 101L1282 83M1177 100L1308 84M1230 99L1353 83M1260 101L1398 82M1313 99L1426 83M1345 101L1470 83M1397 100L1513 82M1449 98L1543 83M1482 100L1586 82M1534 99L1616 83M1569 101L1659 82M1619 99L1701 81M1669 98L1733 83M1706 100L1774 82M1755 99L1808 83M1803 97L1849 82M1842 99L1889 81M1889 98L1924 82M1930 100L1964 81M165 102L171 103M1977 98L2003 80M263 96L312 102M2023 97L2039 82M352 91L460 102M2066 99L2078 81M433 86L600 101M2111 98L2116 82M553 85L749 101M2156 96L2154 81M672 84L888 101M2199 95L2192 80M800 85L1039 101M918 84L1177 100M1047 84L1329 100M1165 83L1466 99M1295 83L1619 99M1412 83L1755 99M1528 82L1910 99M1659 82L2044 98M1774 82L2178 97M1906 82L2198 92M2021 81L2195 87M2154 81L2193 82" stroke="rgba(225,220,215,0.07)" stroke-width="1" fill="none"/><path d="M-133 120L165 102M-124 122L177 104M-46 120L241 102M29 119L304 101M41 121L319 103M116 119L382 102M130 122L398 103M204 120L460 102M277 118L521 101M294 121L539 103M366 119L600 101M437 117L619 103M457 120L679 102M527 118L738 100M548 121L760 102M618 119L819 101M686 117L876 100M710 120L900 102M778 118L957 100M844 116L983 102M871 119L1039 101M937 117L1094 99M966 119L1122 101M1030 118L1177 100M1094 116L1230 99M1126 118L1260 101M1188 117L1313 99M1222 119L1345 101M1284 117L1397 100M1345 116L1449 98M1382 118L1482 100M1442 116L1534 99M1500 115L1569 101M1540 117L1619 99M1597 116L1669 98M1639 118L1706 100M1696 116L1755 99M1752 115L1803 97M1796 117L1842 99M-66 116L-46 120M1851 115L1889 98M56 108L116 119M1905 114L1930 100M171 103L286 120M1952 116L1977 98M312 102L447 119M2005 114L2023 97M460 102L618 119M2055 117L2066 99M600 101L778 118M2107 115L2111 98M749 101L951 118M2158 113L2156 96M888 101L1110 117M1039 101L1284 117M1177 100L1442 116M1329 100L1618 117M1466 99L1774 116M1619 99L1952 116M1755 99L2107 115M1910 99L2182 111M2044 98L2180 104" stroke="rgba(225,220,215,0.08)" stroke-width="1" fill="none"/><path d="M-196 126L-124 122M-188 129L-46 120M-179 132L29 119M-171 135L41 121M-162 138L116 119M-75 136L130 122M-64 139L204 120M23 137L277 118M36 140L294 121M122 138L366 119M206 136L437 117M223 139L457 120M306 137L527 118M387 135L548 121M408 138L618 119M488 135L686 117M511 139L710 120M591 136L778 118M668 134L844 116M695 137L871 119M772 135L937 117M847 133L966 119M877 136L1030 118M951 134L1094 116M984 137L1126 118M1058 135L1188 117M1129 133L1222 119M1166 136L1284 117M1236 134L1345 116M1276 137L1382 118M1345 135L1442 116M1413 133L1500 115M1456 136L1540 117M1523 134L1597 116M1588 132L1639 118M1635 135L1696 116M1699 132L1752 115M-199 125L-162 138M1748 136L1796 117M-46 120L23 137M1811 133L1851 115M116 119L214 137M1873 131L1905 114M286 120L397 136M1926 134L1952 116M447 119L591 136M1987 132L2005 114M618 119L772 135M2046 130L2055 117M778 118L968 136M2102 133L2107 115M951 118L1147 134M2160 131L2158 113M1110 117L1345 135M1284 117L1523 134M1442 116L1723 134M1618 117L1899 133M1774 116L2102 133M1952 116L2188 128M2107 115L2185 119" stroke="rgba(225,220,215,0.09)" stroke-width="1" fill="none"/><path d="M-152 141L-75 136M-143 145L-64 139M-132 148L23 137M-122 152L36 140M-110 156L122 138M-14 153L206 136M-0 157L223 139M96 154L306 137M189 152L387 135M207 155L408 138M300 153L488 135M321 157L511 139M412 154L591 136M501 151L668 134M527 155L695 137M615 153L772 135M644 157L847 133M731 154L877 136M816 151L951 134M850 155L984 137M933 152L1058 135M1014 150L1129 133M1053 154L1166 136M1133 151L1236 134M1174 155L1276 137M1254 152L1345 135M1330 150L1413 133M1376 153L1456 136M1452 151L1523 134M1526 148L1588 132M1576 152L1635 135M1648 149L1699 132M-162 138L-110 156M1702 153L1748 136M23 137L96 154M1774 151L1811 133M214 137L310 155M1843 148L1873 131M397 136L514 153M1901 152L1926 134M591 136L731 154M1969 149L1987 132M772 135L933 152M2031 153L2046 130M968 136L1153 153M2097 150L2102 133M1147 134L1353 152M2162 148L2160 131M1345 135L1576 152M1523 134L1774 151M1723 134L1999 151M1899 133L2195 150M2102 133L2191 138" stroke="rgba(225,220,215,0.10)" stroke-width="1" fill="none"/><path d="M-190 167L-14 153M-180 171L-0 157M-169 176L96 154M-60 173L189 152M46 170L207 155M63 175L300 153M168 171L321 157M188 176L412 154M292 173L501 151M392 170L527 155M418 174L615 153M518 171L644 157M614 168L731 154M646 173L816 151M741 170L850 155M777 174L933 152M871 171L1014 150M962 168L1053 154M1003 173L1133 151M1093 169L1174 155M1180 166L1254 152M1227 171L1330 150M1312 168L1376 153M1363 172L1452 151M1447 169L1526 148M1529 166L1576 152M1585 171L1648 149M-110 156L-60 173M1665 168L1702 153M96 154L168 171M1726 172L1774 151M310 155L405 172M1805 169L1843 148M514 153L630 170M1881 166L1901 152M731 154L871 171M1947 171L1969 149M933 152L1093 169M2021 167L2031 153M1153 153L1337 170M2094 164L2097 150M1353 152L1557 168M2165 169L2162 148M1576 152L1805 169M1774 151L2021 167M1999 151L2199 164" stroke="rgba(225,220,215,0.11)" stroke-width="1" fill="none"/><path d="M-157 181L-60 173M-145 187L46 170M-132 192L63 175M-14 189L168 171M3 194L188 176M120 191L292 173M232 187L392 170M256 192L418 174M368 189L518 171M396 194L614 168M506 190L646 173M613 187L741 170M648 192L777 174M753 188L871 171M854 185L962 168M896 190L1003 173M996 187L1093 169M1043 192L1180 166M1141 188L1227 171M1236 185L1312 168M1290 190L1363 172M1383 186L1447 169M1473 183L1529 166M1533 188L1585 171M-60 173L-6 191M1622 185L1665 168M168 171L244 190M1686 190L1726 172M405 172L506 190M1773 186L1805 169M630 170L753 188M1857 183L1881 166M871 171L1019 189M1928 188L1947 171M1093 169L1262 187M2010 184L2021 167M1337 170L1533 188M2087 190L2094 164M1557 168L1773 186M2167 186L2165 169M1805 169L2010 184M2021 167L2166 177" stroke="rgba(225,220,215,0.12)" stroke-width="1" fill="none"/><path d="M-118 199L-14 189M-103 205L3 194M-88 212L120 191M40 207L232 187M60 214L256 192M187 209L368 189M309 205L396 194M338 212L506 190M458 207L613 187M574 203L648 192M611 209L753 188M725 205L854 185M767 212L896 190M880 207L996 187M988 203L1043 192M1038 210L1141 188M1145 205L1236 185M1247 201L1290 190M1305 207L1383 186M1406 203L1473 183M1470 210L1533 188M-6 191L40 207M1569 205L1622 185M244 190L323 208M1664 201L1686 190M506 190L592 206M1735 207L1773 186M753 188L880 207M1828 203L1857 183M1019 189L1145 205M1906 210L1928 188M1262 187L1438 206M1997 205L2010 184M1533 188L1699 204M2084 201L2087 190M1773 186L1997 205M2169 207L2167 186M2010 184L2168 196" stroke="rgba(225,220,215,0.13)" stroke-width="1" fill="none"/><path d="M-195 232L40 207M-54 227L60 214M82 222L187 209M105 230L309 205M240 224L338 212M269 232L458 207M401 227L574 203M528 222L611 209M567 230L725 205M692 224L767 212M812 219L880 207M860 227L988 203M979 222L1038 210M1033 230L1145 205M1149 224L1247 201M1261 219L1305 207M1324 227L1406 203M1433 222L1470 210M40 207L94 226M1504 230L1569 205M323 208L401 227M1611 225L1664 201M592 206L692 224M1713 219L1735 207M880 207L1005 226M1793 227L1828 203M1145 205L1292 223M1893 222L1906 210M1438 206L1611 225M1989 217L1997 205M1699 204L1893 222M2078 225L2084 201M1997 205L2171 219M2171 219L2169 207" stroke="rgba(225,220,215,0.14)" stroke-width="1" fill="none"/><path d="M-181 241L-54 227M-165 250L82 222M-14 244L105 230M130 238L240 224M157 247L269 232M300 241L401 227M333 251L528 222M474 244L567 230M608 238L692 224M653 247L812 219M785 241L860 227M837 251L979 222M967 244L1033 230M1092 238L1149 224M1154 248L1261 219M1276 242L1324 227M-195 232L-173 245M1393 236L1433 222M94 226L157 247M1466 245L1504 230M401 227L474 244M1580 239L1611 225M692 224L785 241M1661 248L1713 219M1005 226L1122 243M1773 242L1793 227M1292 223L1429 240M1879 236L1893 222M1611 225L1773 242M1971 245L1989 217M1893 222L2074 239M2074 239L2078 225M2173 233L2171 219" stroke="rgba(225,220,215,0.15)" stroke-width="1" fill="none"/><path d="M-149 260L-14 244M-131 271L130 238M31 264L157 247M186 257L300 241M217 268L333 251M369 261L474 244M408 272L608 238M558 264L653 247M701 257L785 241M753 268L837 251M893 261L967 244M1027 254L1092 238M1091 265L1154 248M1222 258L1276 242M-173 245L-140 266M1295 268L1393 236M157 247L201 262M1423 261L1466 245M474 244L558 264M1545 254L1580 239M785 241L893 261M1631 265L1661 248M1122 243L1258 263M1749 258L1773 242M1429 240L1587 260M1863 251L1879 236M1773 242L1960 262M1960 262L1971 245M2074 239L2174 248M2070 255L2074 239M2176 265L2173 233" stroke="rgba(225,220,215,0.16)" stroke-width="1" fill="none"/><path d="M-112 283L31 264M57 275L186 257M84 287L217 268M250 279L369 261M287 292L408 272M450 283L558 264M605 276L701 257M657 288L753 268M809 280L893 261M953 272L1027 254M1019 284L1091 265M1161 276L1222 258M-140 266L-112 283M1236 288L1295 268M201 262L250 279M1374 280L1423 261M558 264L630 282M1506 272L1545 254M893 261L986 278M1595 284L1631 265M1258 263L1374 280M1723 276L1749 258M1587 260L1723 276M1844 269L1863 251M1960 262L2121 279M1947 281L1960 262M2065 273L2070 255M2179 285L2176 265" stroke="rgba(225,220,215,0.17)" stroke-width="1" fill="none"/><path d="M-91 296L57 275M-68 310L84 287M114 300L250 279M327 305L450 283M496 296L605 276M546 310L657 288M712 301L809 280M870 292L953 272M936 306L1019 284M1090 297L1161 276M-112 283L-79 303M250 279L306 298M1319 302L1374 280M630 282L712 301M1461 293L1506 272M986 278L1090 297M1555 307L1595 284M1374 280L1507 300M1693 298L1723 276M1723 276L1877 296M1823 289L1844 269M2121 279L2179 285M1933 302L1947 281M2059 293L2065 273M2182 307L2179 285" stroke="rgba(225,220,215,0.18)" stroke-width="1" fill="none"/><path d="M-42 325L114 300M-15 342L287 292M-183 396L327 305M-158 421L496 296M-129 449L546 310M-97 481L712 301M-59 518L870 292M-16 561L936 306M-192 1044L-159 1130M36 612L1090 297M-79 303L1361 1177M97 672L1236 288M306 298L2076 905M171 746L1319 302M712 301L2095 631M-192 1044L1461 293M1090 297L2106 482M382 953L1555 307M1507 300L2193 401M537 1107L1693 298M1877 296L2185 334M1077 1005L1823 289M1361 1177L1933 302M1854 1063L2059 293M2199 445L2182 307" stroke="rgba(225,220,215,0.19)" stroke-width="1" fill="none"/></svg></div><div class="abs" style="left:1206px;top:54px;width:528px;height:52px;background:#3c3c3c;box-shadow:inset 0 -1px 0 #363636"></div><div class="abs" style="left:1216px;top:64px;width:2px;height:32px;background:#5e5e5e"></div><div class="abs" style="left:1222px;top:64px;width:2px;height:32px;background:#5e5e5e"></div><div class="abs" style="left:1237px;top:60px;width:137px;height:40px;border-radius:6px;background:#585858"></div><svg class="ic" style="left:1244px;top:65px" width="32" height="32" viewBox="0 0 32 32"><path d="M2 18 L2 2 L28 2 L28 28 L12 28" fill="none" stroke="#d0d0d0" stroke-width="2"/><path d="M25 6 L13 18" stroke="#d0d0d0" stroke-width="2"/><circle cx="7" cy="23" r="5" fill="none" stroke="#f07848" stroke-width="2.2"/></svg><span class="t" style="left:1280px;top:66px;color:#d2d2d2">Pivot</span><svg class="ic" style="left:1346px;top:75px" width="16" height="10" viewBox="0 0 16 10"><path d="M0 0 L16 0 L8.0 10 Z" fill="#c8c8c8"/></svg><div class="abs" style="left:1380px;top:60px;width:152px;height:40px;border-radius:6px;background:#585858"></div><svg class="ic" style="left:1386px;top:64px" width="32" height="32" viewBox="0 0 32 32"><circle cx="15.5" cy="16" r="13" fill="none" stroke="#d0d0d0" stroke-width="2"/><ellipse cx="15.5" cy="16" rx="5.5" ry="13" fill="none" stroke="#d0d0d0" stroke-width="2"/><path d="M3 11.5 L28 11.5 M3 20.5 L28 20.5" stroke="#d0d0d0" stroke-width="2"/><circle cx="24" cy="24.5" r="6.5" fill="#585858"/><circle cx="24" cy="24.5" r="4.8" fill="none" stroke="#f07848" stroke-width="2.2"/></svg><span class="t" style="left:1423px;top:66px;color:#d2d2d2">Global</span><svg class="ic" style="left:1504px;top:75px" width="16" height="10" viewBox="0 0 16 10"><path d="M0 0 L16 0 L8.0 10 Z" fill="#c8c8c8"/></svg><div class="abs" style="left:1548px;top:64px;width:2px;height:32px;background:#5e5e5e"></div><div class="abs" style="left:1554px;top:64px;width:2px;height:32px;background:#5e5e5e"></div><div class="abs" style="left:1573px;top:60px;width:72px;height:40px;border-radius:7px;background:#272727;box-shadow:inset 0 0 0 1px #1c1c1c, inset 0 2px 0 #121212;overflow:hidden"><div class="abs" style="left:0;top:0;width:67px;height:40px;overflow:hidden"><span class="t" style="left:10px;top:7px;color:#d2d2d2">0.0625</span></div></div><div class="abs" style="left:1655px;top:60px;width:44px;height:40px;border-radius:6px 0 0 6px;background:#46607e"></div><div class="abs" style="left:1701px;top:60px;width:28px;height:40px;border-radius:0 6px 6px 0;background:#46607e"></div><svg class="ic" style="left:1663px;top:64px" width="30" height="32" viewBox="0 0 30 32" fill="#ececec"><rect x="2.5" y="2" width="2.2" height="26"/><rect x="12" y="2" width="2.2" height="12"/><rect x="20.5" y="2" width="2.2" height="12"/><rect x="0" y="5.6" width="25" height="2.2"/><rect x="0" y="13.6" width="13" height="2.2"/><rect x="0" y="22" width="12" height="2.2"/><path d="M14.6 14 L18.8 14 L21.3 19.6 L23.8 14 L28 14 L23.4 22.4 L23.4 29.8 L19.2 29.8 L19.2 22.4 Z" stroke="#46607e" stroke-width="1"/></svg><svg class="ic" style="left:1707px;top:75px" width="16" height="10" viewBox="0 0 16 10"><path d="M0 0 L16 0 L8.0 10 Z" fill="#d0d0d0"/></svg><svg class="ic" style="left:1206px;top:105px" width="528" height="698" viewBox="1206 105 528 698"><path d="M1479 105 L1553 303" stroke="#e8e8e0" stroke-width="1.1"/><path d="M1553 306 L1734 333" stroke="#d8d8d8" stroke-width="1.1"/><path d="M1546 312 L1561 312 L1561 316 L1546 316 Z" fill="#4e4e4e"/><circle cx="1553" cy="301.5" r="3.3" fill="#2e6fd8"/><circle cx="1534" cy="249.5" r="5.5" fill="#fff8e0" stroke="#d8cc98" stroke-width="1.6"/><path d="M1541.5 249.5 L1545.0 249.5" stroke="#d8cc98" stroke-width="1.5"/><path d="M1540.9 252.4 L1544.2 253.7" stroke="#d8cc98" stroke-width="1.5"/><path d="M1539.3 254.8 L1541.8 257.3" stroke="#d8cc98" stroke-width="1.5"/><path d="M1536.9 256.4 L1538.2 259.7" stroke="#d8cc98" stroke-width="1.5"/><path d="M1534.0 257.0 L1534.0 260.5" stroke="#d8cc98" stroke-width="1.5"/><path d="M1531.1 256.4 L1529.8 259.7" stroke="#d8cc98" stroke-width="1.5"/><path d="M1528.7 254.8 L1526.2 257.3" stroke="#d8cc98" stroke-width="1.5"/><path d="M1527.1 252.4 L1523.8 253.7" stroke="#d8cc98" stroke-width="1.5"/><path d="M1526.5 249.5 L1523.0 249.5" stroke="#d8cc98" stroke-width="1.5"/><path d="M1527.1 246.6 L1523.8 245.3" stroke="#d8cc98" stroke-width="1.5"/><path d="M1528.7 244.2 L1526.2 241.7" stroke="#d8cc98" stroke-width="1.5"/><path d="M1531.1 242.6 L1529.8 239.3" stroke="#d8cc98" stroke-width="1.5"/><path d="M1534.0 242.0 L1534.0 238.5" stroke="#d8cc98" stroke-width="1.5"/><path d="M1536.9 242.6 L1538.2 239.3" stroke="#d8cc98" stroke-width="1.5"/><path d="M1539.3 244.2 L1541.8 241.7" stroke="#d8cc98" stroke-width="1.5"/><path d="M1540.9 246.6 L1544.2 245.3" stroke="#d8cc98" stroke-width="1.5"/></svg><div class="abs" style="left:1210px;top:110px;width:86px;height:290px;border-radius:8px;background:#141414"></div><div class="abs" style="left:1237px;top:122px;width:33px;height:2px;background:#707070"></div><div class="abs" style="left:1237px;top:128px;width:33px;height:2px;background:#707070"></div><div class="abs" style="left:1216px;top:145px;width:75px;height:40px;border-radius:6px 6px 0 0;background:#585858"></div><div class="abs" style="left:1216px;top:187px;width:75px;height:40px;border-radius:0;background:#585858"></div><div class="abs" style="left:1216px;top:229px;width:75px;height:40px;border-radius:0;background:#585858"></div><div class="abs" style="left:1216px;top:271px;width:75px;height:40px;border-radius:0;background:#585858"></div><div class="abs" style="left:1216px;top:313px;width:75px;height:40px;border-radius:0;background:#46607c"></div><svg class="ic" style="left:1236px;top:148px" width="34" height="36" viewBox="0 0 34 36" fill="#d2d2d2" stroke="#d2d2d2" stroke-linecap="round"><path d="M8.5 20 L26.5 17.5 L24 31 L11 31 Z" stroke="none"/><path d="M5 15.5 L11 25.5" stroke-width="4.4"/><path d="M11.8 5 L12.8 20" stroke-width="4"/><path d="M18 2.8 L18 20" stroke-width="4"/><path d="M23.6 5.2 L22.6 20" stroke-width="4"/><path d="M29 11.8 L25 23" stroke-width="4"/></svg><svg class="ic" style="left:1236px;top:190px" width="34" height="34" viewBox="0 0 34 34" fill="none" stroke="#d2d2d2" stroke-width="2"><path d="M17 2 L17 13 M17 21 L17 32 M2 17 L13 17 M21 17 L32 17 M12.5 6.5 L17 2 L21.5 6.5 M12.5 27.5 L17 32 L21.5 27.5 M6.5 12.5 L2 17 L6.5 21.5 M27.5 12.5 L32 17 L27.5 21.5"/></svg><svg class="ic" style="left:1236px;top:232px" width="34" height="34" viewBox="0 0 34 34" fill="none" stroke="#d2d2d2" stroke-width="2"><path d="M12.7 3.6 A14.6 14.6 0 0 0 11 29.8"/><path d="M11 22 L11 30 L3.5 30"/><path d="M17.8 30 A14.6 14.6 0 0 0 21.9 3.9"/><path d="M30.3 3.9 L21.9 3.9 L21.9 11.4"/></svg><svg class="ic" style="left:1236px;top:274px" width="34" height="34" viewBox="0 0 34 34" fill="none" stroke="#d2d2d2" stroke-width="2"><rect x="4.5" y="4.3" width="26" height="25.5" rx="1.5"/><path d="M4.5 21 L11.9 21 L11.9 29.8"/><path d="M15.2 18 L24.4 8.8 M18.6 8.8 L24.4 8.8 L24.4 14.7"/></svg><svg class="ic" style="left:1236px;top:316px" width="34" height="34" viewBox="0 0 34 34" fill="#f0f0f0"><rect x="3" y="3" width="6" height="6" rx="1"/><rect x="25" y="3" width="6" height="6" rx="1"/><rect x="3" y="25" width="6" height="6" rx="1"/><rect x="25" y="25" width="6" height="6" rx="1"/><rect x="11" y="5" width="12" height="2"/><rect x="11" y="27" width="12" height="2"/><rect x="5" y="11" width="2" height="12"/><rect x="27" y="11" width="2" height="12"/></svg><div class="abs" style="left:1214px;top:354px;width:500px;height:360px;border-radius:8px;background:rgba(18,18,18,0.96)"></div><div class="abs" style="left:1224px;top:366px;width:32px;height:2px;background:#6a6a6a"></div><div class="abs" style="left:1224px;top:372px;width:32px;height:2px;background:#6a6a6a"></div><svg class="ic" style="left:1238px;top:360px" width="30" height="30" viewBox="0 0 30 30" fill="none" stroke="#2a2a2a" stroke-width="1.6"><path d="M4 20 A12 12 0 0 1 11 4 M19 4 A12 12 0 0 1 26 22 M8 25 A12 12 0 0 0 22 26"/><path d="M15 6 L15 26 M5 16 L25 16 M12 23 L15 26 L18 23 M22 13 L25 16 L22 19"/></svg><span class="t" style="left:1267px;top:355px;font-size:24px;color:#acacac">Cameras</span><div class="abs" style="left:1223px;top:386px;width:332px;height:40px;border-radius:6px;background:#5c5c5c"></div><svg class="ic" style="left:1232px;top:396px" width="28" height="20" viewBox="0 0 28 20" fill="#8cd0f8"><rect x="1" y="1" width="16" height="17" rx="2"/><path d="M18.5 7 L25 2.5 L25 17 L18.5 12.5 Z"/></svg><span class="t" style="left:1267px;top:392px;color:#d2d2d2">Camera<span style="margin:0 1.2px">-</span>figurine<span style="margin:0 1.2px">-</span>cube</span><svg class="ic" style="left:1527px;top:402px" width="16" height="10" viewBox="0 0 16 10"><path d="M0 0 L16 0 L8.0 10 Z" fill="#d2d2d2"/></svg><div class="abs" style="left:1561px;top:386px;width:64px;height:40px;border-radius:6px;background:#5c5c5c"></div><svg class="ic" style="left:1582px;top:395px" width="22" height="22" viewBox="0 0 22 22"><circle cx="11" cy="11" r="10" fill="#d6d6d6"/><rect x="9.2" y="9" width="3.6" height="8" fill="#5c5c5c"/><rect x="9.2" y="3.5" width="3.6" height="3" fill="#5c5c5c"/></svg><div class="abs" style="left:1631px;top:386px;width:44px;height:40px;border-radius:6px 0 0 6px;background:#5c5c5c"></div><div class="abs" style="left:1677px;top:386px;width:28px;height:40px;border-radius:0 6px 6px 0;background:#5c5c5c"></div><svg class="ic" style="left:1640px;top:393px" width="26" height="26" viewBox="0 0 26 26" fill="none" stroke="#d6d6d6" stroke-width="2.2"><rect x="8" y="8" width="10" height="10"/><path d="M2 8 L2 2 L8 2 M18 2 L24 2 L24 8 M24 18 L24 24 L18 24 M8 24 L2 24 L2 18 M3 3 L6 6 M23 3 L20 6 M23 23 L20 20 M3 23 L6 20"/></svg><svg class="ic" style="left:1683px;top:402px" width="16" height="10" viewBox="0 0 16 10"><path d="M0 0 L16 0 L8.0 10 Z" fill="#d6d6d6"/></svg><div class="abs" style="left:1220px;top:433px;width:488px;height:274px;background:#394b75;overflow:hidden"><div class="abs" style="left:0;top:0;width:488px;height:274px;filter:blur(0.9px)"><div class="abs" style="left:182px;top:146px;width:23px;height:76px;background:linear-gradient(180deg,#6b79c2 0px,#6470b8 4px,#5a62ae 14px,#5860ab 100%)"></div><div class="abs" style="left:283px;top:146px;width:23px;height:76px;background:linear-gradient(180deg,#6b79c2 0px,#6470b8 4px,#5a62ae 14px,#5860ab 100%)"></div><div class="abs" style="left:283px;top:148px;width:5px;height:74px;background:linear-gradient(90deg,#4a5096,#5860ab)"></div><div class="abs" style="left:199px;top:148px;width:6px;height:74px;background:linear-gradient(90deg,#5860ab,#4c5399)"></div><div class="abs" style="left:206px;top:203px;width:26px;height:43px;background:linear-gradient(180deg,#3c417c 0%,#4c5197 22%,#5a5fab 55%,#5a5fab 100%)"></div><div class="abs" style="left:256px;top:203px;width:26px;height:43px;background:linear-gradient(180deg,#3c417c 0%,#4c5197 22%,#5a5fab 55%,#5a5fab 100%)"></div><div class="abs" style="left:230px;top:203px;width:28px;height:20px;background:linear-gradient(180deg,#555ba4 0%,#40448a 70%,#363a78 100%)"></div><div class="abs" style="left:205px;top:148px;width:78px;height:56px;background:linear-gradient(90deg,#3f4683 0%,#4d5598 7%,#5a64ab 22%,#5f6ab2 55%,#5d67ae 90%,#4d5598 100%)"></div><div class="abs" style="left:218px;top:94px;width:52px;height:54px;background:linear-gradient(180deg,#6472b7 0%,#5f6ab2 55%,#5059a2 100%)"></div></div></div><div class="abs" style="left:1210px;top:748px;width:540px;height:52px;border-radius:8px;background:#141414"></div><div class="abs" style="left:1220px;top:758px;width:2px;height:32px;background:#6a6a6a"></div><div class="abs" style="left:1226px;top:758px;width:2px;height:32px;background:#6a6a6a"></div><div class="abs" style="left:1241px;top:754px;width:64px;height:40px;border-radius:6px 0 0 6px;background:#4a5f7c"></div><div class="abs" style="left:1307px;top:754px;width:64px;height:40px;border-radius:0;background:#4a5f7c"></div><div class="abs" style="left:1373px;top:754px;width:64px;height:40px;border-radius:0;background:#4a5f7c"></div><div class="abs" style="left:1439px;top:754px;width:64px;height:40px;border-radius:0;background:#4a5f7c"></div><div class="abs" style="left:1505px;top:754px;width:64px;height:40px;border-radius:0;background:#4a5f7c"></div><div class="abs" style="left:1571px;top:754px;width:64px;height:40px;border-radius:0;background:#585858"></div><div class="abs" style="left:1637px;top:754px;width:64px;height:40px;border-radius:0;background:#4a5f7c"></div><div class="abs" style="left:1703px;top:754px;width:64px;height:40px;border-radius:0;background:#4a5f7c"></div><svg class="ic" style="left:1258px;top:759px" width="30" height="30" viewBox="0 0 30 30" fill="#d8d8d8"><rect x="1" y="1" width="6" height="6" rx="1"/><rect x="23" y="1" width="6" height="6" rx="1"/><rect x="1" y="23" width="6" height="6" rx="1"/><rect x="23" y="23" width="6" height="6" rx="1"/><rect x="9" y="3" width="12" height="2"/><rect x="9" y="25" width="12" height="2"/><rect x="3" y="9" width="2" height="12"/><rect x="25" y="9" width="2" height="12"/></svg><svg class="ic" style="left:1324px;top:759px" width="30" height="30" viewBox="0 0 30 30" fill="#d8d8d8"><rect x="2" y="1" width="24" height="9" rx="2.5"/><rect x="13.5" y="3" width="10.5" height="5" fill="#4a5f7c"/><rect x="2" y="17" width="24" height="2"/><rect x="6.5" y="14.5" width="4" height="7" rx="1"/><rect x="2" y="25" width="24" height="2"/><rect x="15" y="22.5" width="4" height="7" rx="1"/></svg><svg class="ic" style="left:1390px;top:759px" width="30" height="30" viewBox="0 0 30 30" fill="#d8d8d8"><rect x="3" y="1" width="2" height="20"/><rect x="10" y="1" width="2" height="14"/><rect x="1" y="4" width="16" height="2"/><rect x="1" y="11" width="12" height="2"/><rect x="1" y="17" width="6" height="2"/><rect x="15" y="14" width="2" height="15"/><rect x="21" y="8" width="2" height="21"/><rect x="27" y="8" width="2" height="21"/><rect x="14" y="18" width="16" height="2"/><rect x="14" y="24" width="16" height="2"/><path d="M0 28.5 L28 0.5 L29.5 2 L1.5 30 Z"/></svg><svg class="ic" style="left:1455px;top:758px" width="32" height="32" viewBox="0 0 32 32"><circle cx="15.5" cy="15.8" r="13.5" fill="#d8d8d8"/><circle cx="13.9" cy="14.2" r="10.2" fill="#4a5f7c"/></svg><svg class="ic" style="left:1520px;top:758px" width="34" height="32" viewBox="0 0 34 32"><circle cx="8.5" cy="5.5" r="4.5" fill="#d8d8d8"/><path d="M2 20 L16 12 L30 20 L16 28 Z M9 16 L23 24 M23 16 L9 24" fill="none" stroke="#d8d8d8" stroke-width="2.2"/></svg><svg class="ic" style="left:1587px;top:760px" width="30" height="30" viewBox="0 0 30 30" fill="none" stroke="#d8d8d8" stroke-width="2.2"><circle cx="10.5" cy="10.8" r="7"/><path d="M15.8 16.2 L25.5 24.8" stroke-width="3.4" stroke-linecap="round"/></svg><svg class="ic" style="left:1652px;top:758px" width="34" height="34" viewBox="0 0 34 34" fill="#d8d8d8"><rect x="3" y="2" width="16.5" height="15.5" rx="2.5"/><path d="M20 7.5 L27 4 L27 18 L20 14.5 Z"/><path d="M11 24.5 Q21 12.5 31 24.5 Q21 36.5 11 24.5 Z"/><circle cx="21" cy="24.5" r="4.8" fill="#4a5f7c"/><circle cx="21" cy="24.5" r="2.6" fill="{ic}"/></svg><svg class="ic" style="left:1716px;top:760px" width="30" height="30" viewBox="0 0 30 30" fill="none" stroke="#d8d8d8" stroke-width="2.2"><circle cx="15" cy="15" r="12"/><path d="M10 22 L20 8"/></svg>
</body></html>
